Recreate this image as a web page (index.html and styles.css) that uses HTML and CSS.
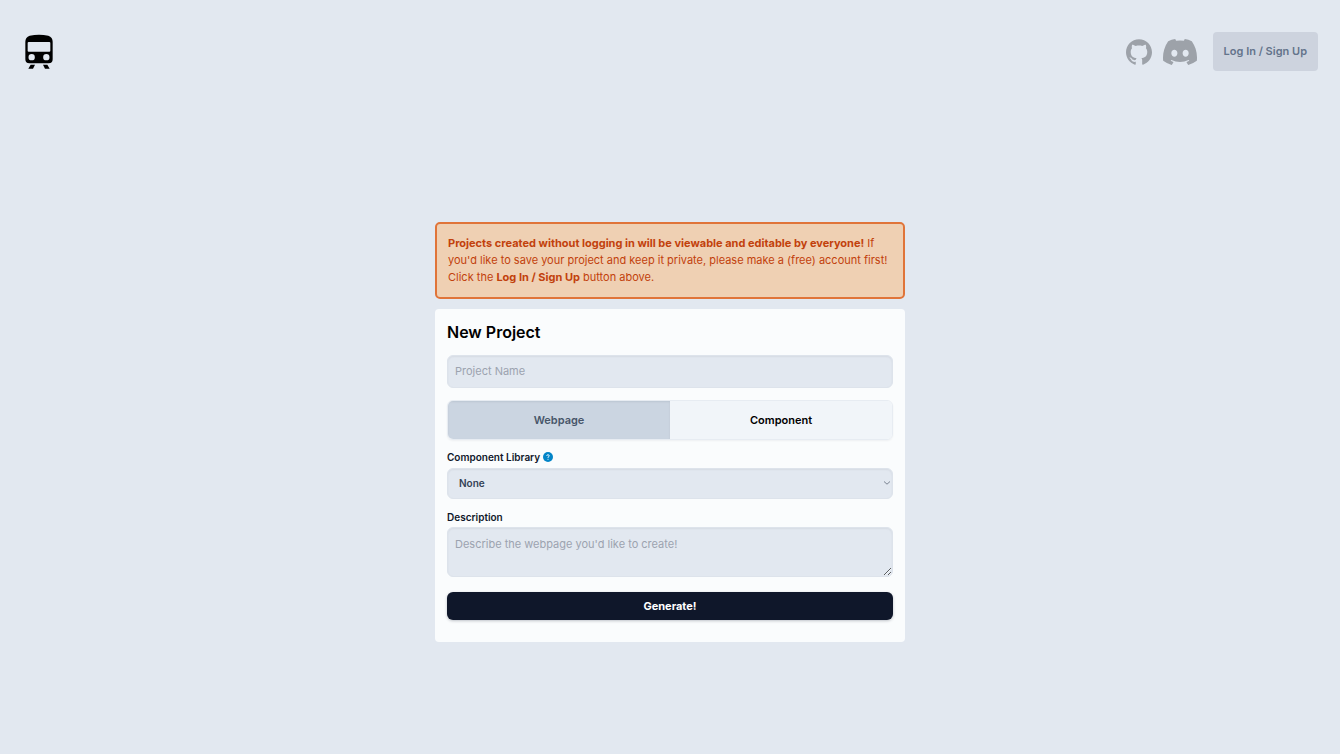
FILE: index.html
```html
<!DOCTYPE html>
<html lang="en">
<head>
<meta charset="utf-8">
<meta name="viewport" content="width=device-width, initial-scale=1">
<title>New Project</title>
<link rel="stylesheet" href="styles.css">
</head>
<body>
<header class="topbar">
  <a class="brand" href="#" aria-label="Home">
    <svg width="28" height="35" viewBox="0 0 84 105" aria-hidden="true">
      <path fill-rule="evenodd" d="M14 5Q42-1 70 5Q83 9 83 23V76Q83 88 71 88H13Q1 88 1 76V23Q1 9 14 5ZM11 24Q8 24 8 27V50Q8 53 11 53H73Q76 53 76 50V27Q76 24 73 24ZM20 60a9.500 9.500 0 1 0 0 19a9.500 9.500 0 1 0 0-19ZM64 60a9.500 9.500 0 1 0 0 19a9.500 9.500 0 1 0 0-19Z"/>
      <path d="M17 92H30L24 104H10ZM54 92H67L74 104H60Z"/>
    </svg>
  </a>
  <nav class="links">
    <a class="icon-link" href="#" aria-label="GitHub">
      <svg width="26" height="26" viewBox="0 0 24 24" aria-hidden="true"><path d="M12 .297c-6.630 0-12 5.373-12 12 0 5.303 3.438 9.800 8.205 11.385.6.113.82-.258.82-.577 0-.285-.01-1.040-.015-2.040-3.338.724-4.042-1.610-4.042-1.610C4.422 18.070 3.633 17.700 3.633 17.700c-1.087-.744.084-.729.084-.729 1.205.084 1.838 1.236 1.838 1.236 1.070 1.835 2.809 1.305 3.495.998.108-.776.417-1.305.76-1.605-2.665-.3-5.466-1.332-5.466-5.930 0-1.310.465-2.380 1.235-3.220-.135-.303-.54-1.523.105-3.176 0 0 1.005-.322 3.300 1.230.96-.267 1.980-.399 3-.405 1.020.006 2.040.138 3 .405 2.280-1.552 3.285-1.230 3.285-1.230.645 1.653.24 2.873.12 3.176.765.84 1.230 1.910 1.230 3.220 0 4.610-2.805 5.625-5.475 5.920.42.36.81 1.096.81 2.220 0 1.606-.015 2.896-.015 3.286 0 .315.21.69.825.57C20.565 22.092 24 17.592 24 12.297c0-6.627-5.373-12-12-12"/></svg>
    </a>
    <a class="icon-link" href="#" aria-label="Discord">
      <svg width="34" height="34" viewBox="0 0 24 24" aria-hidden="true"><path d="M20.317 4.370a19.791 19.791 0 0 0-4.885-1.515.074.074 0 0 0-.079.037c-.21.375-.444.864-.608 1.250a18.270 18.270 0 0 0-5.487 0 12.640 12.640 0 0 0-.617-1.250.077.077 0 0 0-.079-.037A19.736 19.736 0 0 0 3.677 4.370a.07.07 0 0 0-.032.027C.533 9.046-.32 13.580.099 18.058a.082.082 0 0 0 .031.057 19.900 19.900 0 0 0 5.993 3.030.078.078 0 0 0 .084-.028c.462-.63.874-1.295 1.226-1.994a.076.076 0 0 0-.041-.106 13.107 13.107 0 0 1-1.872-.892.077.077 0 0 1-.008-.128c.126-.094.252-.192.372-.292a.074.074 0 0 1 .078-.01c3.928 1.793 8.180 1.793 12.062 0a.074.074 0 0 1 .078.010c.12.098.246.198.373.292a.077.077 0 0 1-.006.127 12.299 12.299 0 0 1-1.873.892.077.077 0 0 0-.041.107c.36.698.772 1.362 1.225 1.993a.076.076 0 0 0 .084.028 19.839 19.839 0 0 0 6.002-3.030.077.077 0 0 0 .032-.054c.5-5.177-.838-9.674-3.549-13.660a.061.061 0 0 0-.031-.030zM8.020 15.330c-1.183 0-2.157-1.085-2.157-2.419s.955-2.419 2.157-2.419c1.210 0 2.176 1.096 2.157 2.420 0 1.333-.956 2.418-2.157 2.418zm7.975 0c-1.183 0-2.157-1.085-2.157-2.419s.955-2.419 2.157-2.419c1.210 0 2.176 1.096 2.157 2.420 0 1.333-.946 2.418-2.157 2.418z"/></svg>
    </a>
    <button class="login" type="button">Log In / Sign Up</button>
  </nav>
</header>
<main class="content">
  <p class="notice" role="alert"><strong>Projects created without logging in will be viewable and editable by everyone!</strong> If you'd like to save your project and keep it private, please make a (free) account first! Click the <strong>Log In / Sign Up</strong> button above.</p>
  <form class="card">
    <h1 class="title">New Project</h1>
    <input class="field name" type="text" placeholder="Project Name" aria-label="Project Name">
    <div class="tabs" role="group" aria-label="Project type">
      <button class="tab tab-active" type="button" aria-pressed="true">Webpage</button>
      <button class="tab" type="button" aria-pressed="false">Component</button>
    </div>
    <div class="label-row">
      <label class="label" for="library">Component Library</label>
      <button class="help" type="button" aria-label="About component libraries">
        <svg width="10" height="10" viewBox="0 0 20 20" aria-hidden="true"><circle cx="10" cy="10" r="10" fill="#0284c7"/><path d="M7.500 7.800Q7.500 5.500 10 5.500T12.500 7.800Q12.500 9 10 10.500V12M10 13.700V15.500" fill="none" stroke="#dff2fd" stroke-width="2"/></svg>
      </button>
    </div>
    <div class="select-wrap">
      <select class="field library" id="library"><option>None</option></select>
      <svg class="chevron" width="8" height="6" viewBox="0 0 8 6" aria-hidden="true"><path d="M1 1.500L4 4.200L7 1.500" fill="none" stroke="#7b8492"/></svg>
    </div>
    <label class="label" for="description">Description</label>
    <textarea class="field description" id="description" placeholder="Describe the webpage you'd like to create!"></textarea>
    <button class="generate" type="submit">Generate!</button>
  </form>
</main>
</body>
</html>
```
FILE: styles.css
```css
* {
  box-sizing: border-box;
}

body {
  margin: 0;
  min-height: 100vh;
  display: flex;
  flex-direction: column;
  background: #e2e8f0;
  color: #000;
  font-family: Inter, "Liberation Sans", sans-serif;
  font-size: 11px;
  line-height: 17px;
}

button,
input,
select,
textarea {
  font: inherit;
  color: inherit;
}

button {
  border: 0;
  padding: 0;
  cursor: pointer;
}

svg {
  display: block;
}

.topbar {
  display: flex;
  align-items: center;
  justify-content: space-between;
  padding: 32px 22px 32px 25px;
}

.links {
  display: flex;
  align-items: center;
}

.icon-link {
  margin-right: 11px;
  fill: #9da2a9;
}

.login {
  margin-left: 5px;
  padding: 11px;
  border-radius: 4px;
  background: #cdd3de;
  color: #64748b;
  font-weight: 600;
}

.content {
  flex: 1;
  display: flex;
  flex-direction: column;
  align-items: center;
  justify-content: center;
  gap: 10px;
  padding-top: 6px;
}

.notice,
.card {
  width: 100%;
  max-width: 470px;
}

.notice {
  margin: 0;
  padding: 11px;
  border: 2px solid #e07439;
  border-radius: 5px;
  background: #efd0b3;
  color: #c2410c;
}

.notice strong {
  font-weight: 700;
}

.card {
  display: flex;
  flex-direction: column;
  padding: 11px 12px 22px;
  border-radius: 4px;
  background: #fafcfd;
}

.title {
  margin: 0 0 11px;
  font-size: 16px;
  line-height: 24px;
  font-weight: 600;
}

.field {
  display: block;
  width: 100%;
  margin: 0;
  border: 1px solid #dde3eb;
  border-radius: 6px;
  background: #e2e8f0;
  box-shadow: inset 0 1px 2px rgba(15, 23, 42, 0.06);
}

.field::placeholder {
  color: #9ca3af;
  opacity: 1;
}

.name {
  padding: 7px;
}

.tabs {
  display: flex;
  margin: 12px 0 9px;
  border: 1px solid #e7ecf2;
  border-radius: 6px;
  overflow: hidden;
  box-shadow: 0 1px 2px rgba(15, 23, 42, 0.05);
}

.tab {
  flex: 1;
  padding: 11px 0;
  background: #f1f5f9;
  font-weight: 600;
  line-height: 16px;
}

.tab-active {
  background: #cbd5e1;
  color: #475569;
  box-shadow: inset 0 1px 2px rgba(15, 23, 42, 0.08);
}

.label-row {
  display: flex;
  align-items: center;
  gap: 3px;
}

.label {
  color: #0f172a;
  font-size: 10px;
  font-weight: 600;
}

.help {
  background: none;
}

.select-wrap {
  position: relative;
  margin: 2px 0 10px;
}

.library {
  appearance: none;
  padding: 6px 11px;
  color: #334155;
  font-size: 10px;
  font-weight: 600;
}

.chevron {
  position: absolute;
  right: 2px;
  top: 12px;
  pointer-events: none;
}

.description {
  height: 50px;
  margin: 1px 0 15px;
  padding: 8px 7px;
  resize: vertical;
}

.generate {
  padding: 5px;
  border-radius: 6px;
  background: #0f172a;
  color: #fff;
  font-weight: 700;
  line-height: 18px;
  box-shadow: 0 1px 3px rgba(15, 23, 42, 0.25);
}
```
